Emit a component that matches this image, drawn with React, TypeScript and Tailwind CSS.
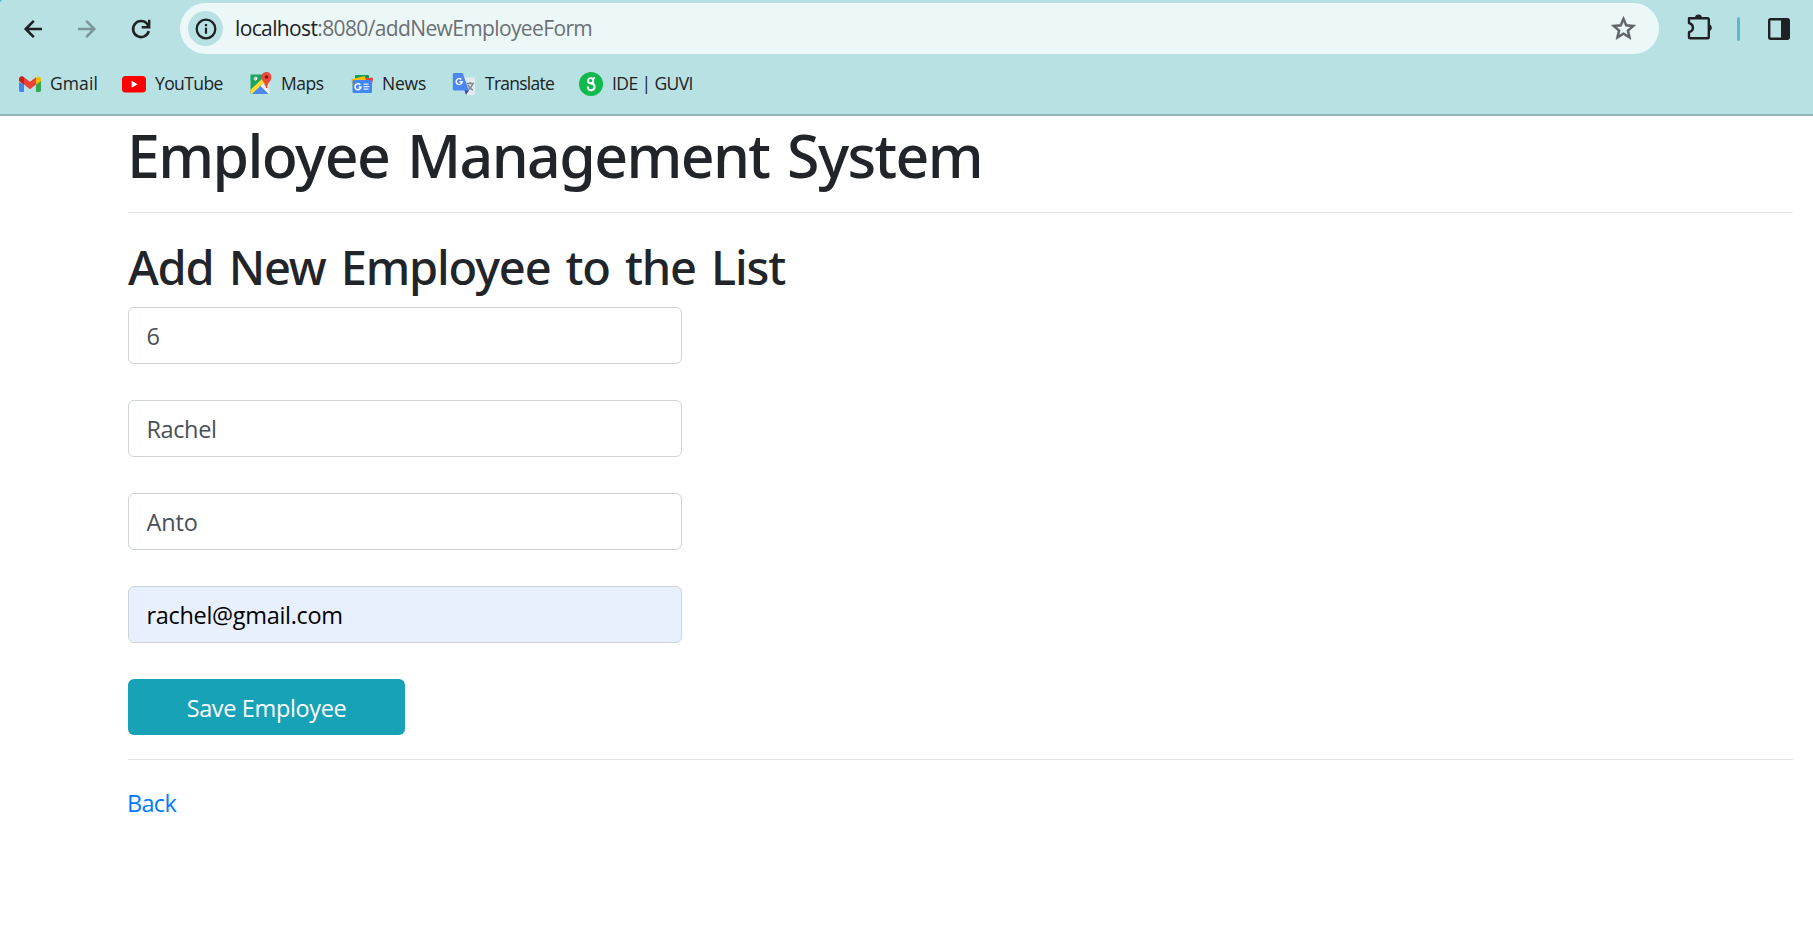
import React from "react";

const GmailIcon = () => (
  <svg className="h-6 w-6 shrink-0" viewBox="0 0 24 24">
    <path d="M1 7v8.6c0 .8.6 1.4 1.4 1.4H6V9.5z" transform="translate(0 3)" fill="#4285f4" />
    <path d="M18 9.500V20h3.600c.8 0 1.400-.6 1.400-1.400V6.500z" fill="#34a853" />
    <path d="M18 5.400V12.700L23 9V7c0-2.300-2.600-3.200-4-2z" fill="#fbbc04" />
    <path d="M6 12.600V5.200l6 4.600 6-4.600v7.400l-6 4.600z" fill="#ea4335" />
    <path d="M1 7v2l5 3.700V5.200L5 4.600C3.400 3.500 1 4.700 1 7z" fill="#c5221f" />
  </svg>
);

const YouTubeIcon = () => (
  <svg className="h-6 w-6 shrink-0" viewBox="0 0 24 24">
    <rect x="0" y="4" width="24" height="16.500" rx="3.500" fill="#ff0000" />
    <path d="M9.600 8.800v7l6-3.500z" fill="#fff" />
  </svg>
);

const MapsIcon = () => (
  <svg className="h-6 w-6 shrink-0" viewBox="0 0 24 24">
    <path d="M1.500 2.500H19V21.500H1.500z" fill="#1ea362" />
    <path d="M1.500 17.800 14.500 5.500l3 5.500L3 22c-.9-.2-1.500-.8-1.500-1.500z" fill="#fddb30" />
    <path d="M3 22 12.500 13l8.500 9z" fill="#4a89f3" />
    <path d="M11.500 14 14 11.600l7 7V20.500c0 .8-.6 1.500-1.400 1.500z" fill="#f2f2f2" />
    <path d="M15.500 12 20.500 8.500V18z" fill="#d9dde0" />
    <path d="M8.700 6.200H6.700v1.100h1.100c-.8 1.600-3 .7-2.700-.8.200-1.400 1.700-1.800 2.700-.9" fill="none" stroke="#fff" strokeWidth="1" />
    <path d="M17.500 0c-2.900 0-5 2.200-5 5 0 4.200 4.200 5.500 4.500 11h1C18.300 10.500 22.500 9.200 22.500 5c0-2.800-2.100-5-5-5z" fill="#e94b3c" />
    <circle cx="17.500" cy="5" r="1.800" fill="#811411" />
  </svg>
);

const NewsIcon = () => (
  <svg className="h-6 w-6 shrink-0" viewBox="0 0 24 24">
    <rect x="5" y="3" width="14" height="12" rx="1" fill="#0c9d58" />
    <path d="M14 6.500 22.300 5.600 23 7 21 17H12z" fill="#ea4335" />
    <path d="M1.200 7.300 14.500 4 17 11 3 16z" fill="#ffc107" />
    <rect x="2.500" y="8" width="19.500" height="13" rx="1.300" fill="#4285f4" />
    <path d="M10.300 12.800a3 3 0 1 0 .7 2.100H8.600" fill="none" stroke="#fff" strokeWidth="1.500" />
    <path d="M13.500 12.200h5M13.500 14.700h6M13.500 17.200h5" stroke="#e4edfd" strokeWidth="1.200" />
  </svg>
);

const TranslateIcon = () => (
  <svg className="h-6 w-6 shrink-0" viewBox="0 0 24 24">
    <path d="M9 5.500h12.500c.8 0 1.500.6 1.500 1.500v14.500c0 .8-.7 1.500-1.500 1.500H14z" fill="#e6e9ec" />
    <path d="M14.500 11.500h7.500M18.200 10v1.500M20.800 11.500c-.6 2.500-2.500 4.600-4.300 5.800M15.800 12.800c1 2 3 4.200 5.200 5.400" fill="none" stroke="#7b8c96" strokeWidth="1.500" />
    <path d="M12.300 17.800h5l-3.300 5.200z" fill="#3746b4" />
    <path d="M2.300 1h8.400l6.100 17.500H2.300C1.500 18.500.8 17.800.8 17V2.500C.8 1.600 1.500 1 2.300 1z" fill="#4a86f0" />
    <path d="M9.300 7.400a3 3 0 1 0 .9 2.300H7.300" fill="none" stroke="#fff" strokeWidth="1.400" />
  </svg>
);

const GuviIcon = () => (
  <svg className="h-6 w-6 shrink-0" viewBox="0 0 24 24">
    <circle cx="12" cy="12" r="12" fill="#10b94b" />
    <g fill="none" stroke="#fff" strokeWidth="1.900" strokeLinecap="round">
      <circle cx="11.700" cy="8.700" r="2.600" />
      <path d="M13.700 7.200 15.300 5.800" />
      <path d="M11.700 11.500h.5a3.400 3.400 0 1 1-3.400 3.700" />
    </g>
  </svg>
);

const bookmarks = [
  { label: "Gmail", Icon: GmailIcon, item: "w-[104px] gap-2", text: "tracking-[0.1px]" },
  { label: "YouTube", Icon: YouTubeIcon, item: "w-[127px] gap-[9px]", text: "tracking-[-0.6px]" },
  { label: "Maps", Icon: MapsIcon, item: "w-[101px] gap-2", text: "tracking-[-0.45px]" },
  { label: "News", Icon: NewsIcon, item: "w-[102px] gap-2", text: "tracking-[-0.2px]" },
  { label: "Translate", Icon: TranslateIcon, item: "w-[127px] gap-[9px]", text: "tracking-[-0.75px]" },
  { label: "IDE | GUVI", Icon: GuviIcon, item: "w-[130px] gap-[9px]", text: "tracking-[-0.6px]" },
];

const BrowserChrome = () => (
  <header className="relative h-[116px] border-b-2 border-[#91b5b9] bg-[#b8e1e4]">
    <svg className="absolute left-0 top-0 h-[3px] w-[3px]" viewBox="0 0 3 3">
      <path d="M0 0h2C.8.500.2 1.500 0 3z" fill="#3fb3bf" />
    </svg>
    <div className="flex h-[57px] items-center pl-[20px] pr-[20px]">
      <svg className="h-[26px] w-[26px] shrink-0" viewBox="0 0 26 26" fill="none" stroke="#202124" strokeWidth="2.600">
        <path d="M22 13H6M13.800 4.800 5.700 13l8.100 8.200" />
      </svg>
      <svg className="ml-7 h-[26px] w-[26px] shrink-0" viewBox="0 0 26 26" fill="none" stroke="#7b9799" strokeWidth="2.600">
        <path d="M4 13h16M12.200 4.800 20.300 13l-8.100 8.200" />
      </svg>
      <svg className="ml-7 h-[26px] w-[26px] shrink-0" viewBox="0 0 26 26" fill="none" stroke="#202124" strokeWidth="2.600">
        <path d="M20.800 15.200A8 8 0 1 1 19.300 8L20.500 10" />
        <path d="M21.200 3.800v7.400h-7.500" strokeWidth="2.400" />
      </svg>
      <div className="ml-[26px] flex h-[51px] w-[1479px] shrink-0 items-center rounded-full bg-[#ecf8f8] pl-2 pr-[21px]">
        <div className="flex h-[35px] w-[35px] items-center justify-center rounded-full bg-[#b8e1e4]">
          <svg className="h-[22px] w-[22px]" viewBox="0 0 22 22" fill="none" stroke="#202124">
            <circle cx="11" cy="11" r="9.300" strokeWidth="2.300" />
            <path d="M11 9.800v6M11 6v2.200" strokeWidth="2.200" />
          </svg>
        </div>
        <div className="ml-3 text-[21px] leading-none tracking-[-0.63px] text-[#6b6f73]">
          <span className="text-[#202124]">localhost</span>:8080/addNewEmployeeForm
        </div>
        <svg className="ml-auto h-[29px] w-[29px]" viewBox="0 0 24 24" fill="#5f6368" stroke="#5f6368" strokeWidth="0.500">
          <path d="m22 9.240-7.190-.62L12 2 9.190 8.630 2 9.240l5.460 4.730L5.820 21 12 17.270 18.180 21l-1.630-7.030L22 9.240zM12 15.400l-3.760 2.270 1-4.280-3.320-2.880 4.380-.38L12 6.100l1.710 4.040 4.380.38-3.320 2.880 1 4.280L12 15.400z" />
        </svg>
      </div>
      <svg className="mb-[3px] ml-[27px] h-[28px] w-[28px] shrink-0" viewBox="0 0 28 28">
        <path d="M3 5.200H21.500a1.300 1.300 0 0 1 1.300 1.300V24a1.300 1.300 0 0 1-1.300 1.300H4.300A1.300 1.300 0 0 1 3 24V19.200c5.200-1.600 5.200-7.500 0-9.200V5.800z" fill="none" stroke="#202124" strokeWidth="2.400" strokeLinejoin="round" />
        <path d="M9 5a3.500 3.500 0 0 1 7 0zM23 11.200a3.600 3.600 0 0 1 0 7z" fill="#202124" />
      </svg>
      <div className="ml-[23px] h-6 w-[3px] shrink-0 rounded-full bg-[#5db9c3]" />
      <svg className="ml-[27px] h-[24px] w-[24px] shrink-0" viewBox="0 0 24 24">
        <rect x="2.200" y="2.200" width="19.600" height="19.600" rx="1.500" fill="none" stroke="#202124" strokeWidth="2.400" />
        <path d="M14 2.500h7.500v19H14z" fill="#202124" />
      </svg>
    </div>
    <nav className="flex h-[54px] items-center pl-[18px]">
      {bookmarks.map(({ label, Icon, item, text }) => (
        <a key={label} className={`flex items-center ${item}`}>
          <Icon />
          <span className={`whitespace-nowrap text-[17.5px] leading-none text-[#202124] ${text}`}>{label}</span>
        </a>
      ))}
    </nav>
  </header>
);

const fields = [
  { name: "id", value: "6", style: "bg-white text-[#495057]" },
  { name: "firstName", value: "Rachel", style: "bg-white text-[#495057] tracking-[-0.4px]" },
  { name: "lastName", value: "Anto", style: "bg-white text-[#495057] tracking-[-0.1px]" },
  { name: "email", value: "rachel@gmail.com", style: "bg-[#e8f0fe] text-black tracking-[-0.32px]" },
];

export default function App() {
  return (
    <div className="flex h-[933px] flex-col overflow-hidden bg-white font-['Open_Sans',sans-serif]">
      <BrowserChrome />
      <main className="ml-32 w-[1665px] pt-[3px] text-[23.5px] text-[#212529]">
        <h1 className="ml-[-1px] font-['Noto_Sans',sans-serif] text-[59px] font-medium leading-[72px] tracking-[-1.6px] [word-spacing:4px]">
          Employee Management System
        </h1>
        <hr className="mb-[25px] mt-[21px] border-[#e5e5e5]" />
        <h2 className="font-['Noto_Sans',sans-serif] text-[47px] font-medium leading-[58px] tracking-[-1.16px] [word-spacing:4px]">
          Add New Employee to the List
        </h2>
        <form className="mt-[11px] flex flex-col items-start gap-9">
          {fields.map(({ name, value, style }) => (
            <input
              key={name}
              name={name}
              defaultValue={value}
              className={`h-[57px] w-[554px] rounded-[6px] border border-[#ced4da] px-[17.5px] outline-none ${style}`}
            />
          ))}
          <button type="button" className="h-14 w-[277px] rounded-[6px] bg-[#17a2b8] pt-[3px] tracking-[-0.36px] text-white">
            Save Employee
          </button>
        </form>
        <hr className="mb-[25px] mt-6 border-[#e5e5e5]" />
        <a className="ml-[-1px] block leading-9 tracking-[-0.7px] text-[#007bff]">Back</a>
      </main>
    </div>
  );
}
